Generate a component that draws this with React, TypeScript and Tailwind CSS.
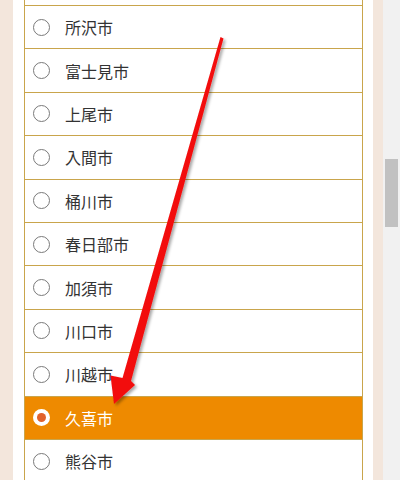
import React from 'react';

const CITIES = [
  '所沢市',
  '富士見市',
  '上尾市',
  '入間市',
  '桶川市',
  '春日部市',
  '加須市',
  '川口市',
  '川越市',
  '久喜市',
  '熊谷市',
];

const SELECTED = '久喜市';

function Radio({ checked }: { checked: boolean }) {
  if (checked) {
    return (
      <span className="flex h-[17px] w-[17px] shrink-0 items-center justify-center rounded-full bg-white">
        <span className="h-[9px] w-[9px] rounded-full bg-[#e2622b]" />
      </span>
    );
  }
  return <span className="h-[17px] w-[17px] shrink-0 rounded-full border border-[#7a7a7a] bg-white" />;
}

function CityRow({ name }: { name: string }) {
  const checked = name === SELECTED;
  return (
    <label
      className={
        checked
          ? 'flex h-[43.4px] items-center gap-[15px] border-b border-[#c9a54c] bg-[#ee8a00] pl-[8px] text-white'
          : 'flex h-[43.4px] items-center gap-[15px] border-b border-[#c9a54c] bg-white pl-[8px] text-[#333]'
      }
    >
      <Radio checked={checked} />
      <span className="text-[16px] leading-none">{name}</span>
    </label>
  );
}

function Arrow() {
  return (
    <svg className="pointer-events-none absolute left-0 top-0" width="400" height="480" viewBox="0 0 400 480">
      <defs>
        <filter id="sh" x="-20%" y="-20%" width="140%" height="140%">
          <feDropShadow dx="2" dy="2" stdDeviation="1.5" floodColor="#000" floodOpacity="0.35" />
        </filter>
      </defs>
      <polygon
        points="220.5,37 223.5,38.5 131,381 135,385 114,404 110.5,375.5 122.5,378"
        fill="#f20d0d"
        filter="url(#sh)"
      />
    </svg>
  );
}

export default function App() {
  return (
    <div
      className="relative flex h-[480px] w-[400px] overflow-hidden bg-white"
      style={{ fontFamily: '"Noto Sans CJK JP", "Noto Sans", sans-serif' }}
    >
      <div className="w-[13px] shrink-0 bg-[#f3e6dc]" />
      <div className="w-[11px] shrink-0 bg-white" />
      <div className="w-[339px] shrink-0 border-x border-[#c9a54c]">
        <div className="h-[6px] border-b border-[#c9a54c] bg-white" />
        {CITIES.map((c) => (
          <CityRow key={c} name={c} />
        ))}
      </div>
      <div className="w-[10px] shrink-0 bg-white" />
      <div className="w-[10px] shrink-0 bg-[#f3e6dc]" />
      <div className="w-[17px] shrink-0 bg-[#f1f1f1] pl-[2px] pt-[159px]">
        <div className="h-[68px] w-[13px] bg-[#c1c1c1]" />
      </div>
      <Arrow />
    </div>
  );
}
